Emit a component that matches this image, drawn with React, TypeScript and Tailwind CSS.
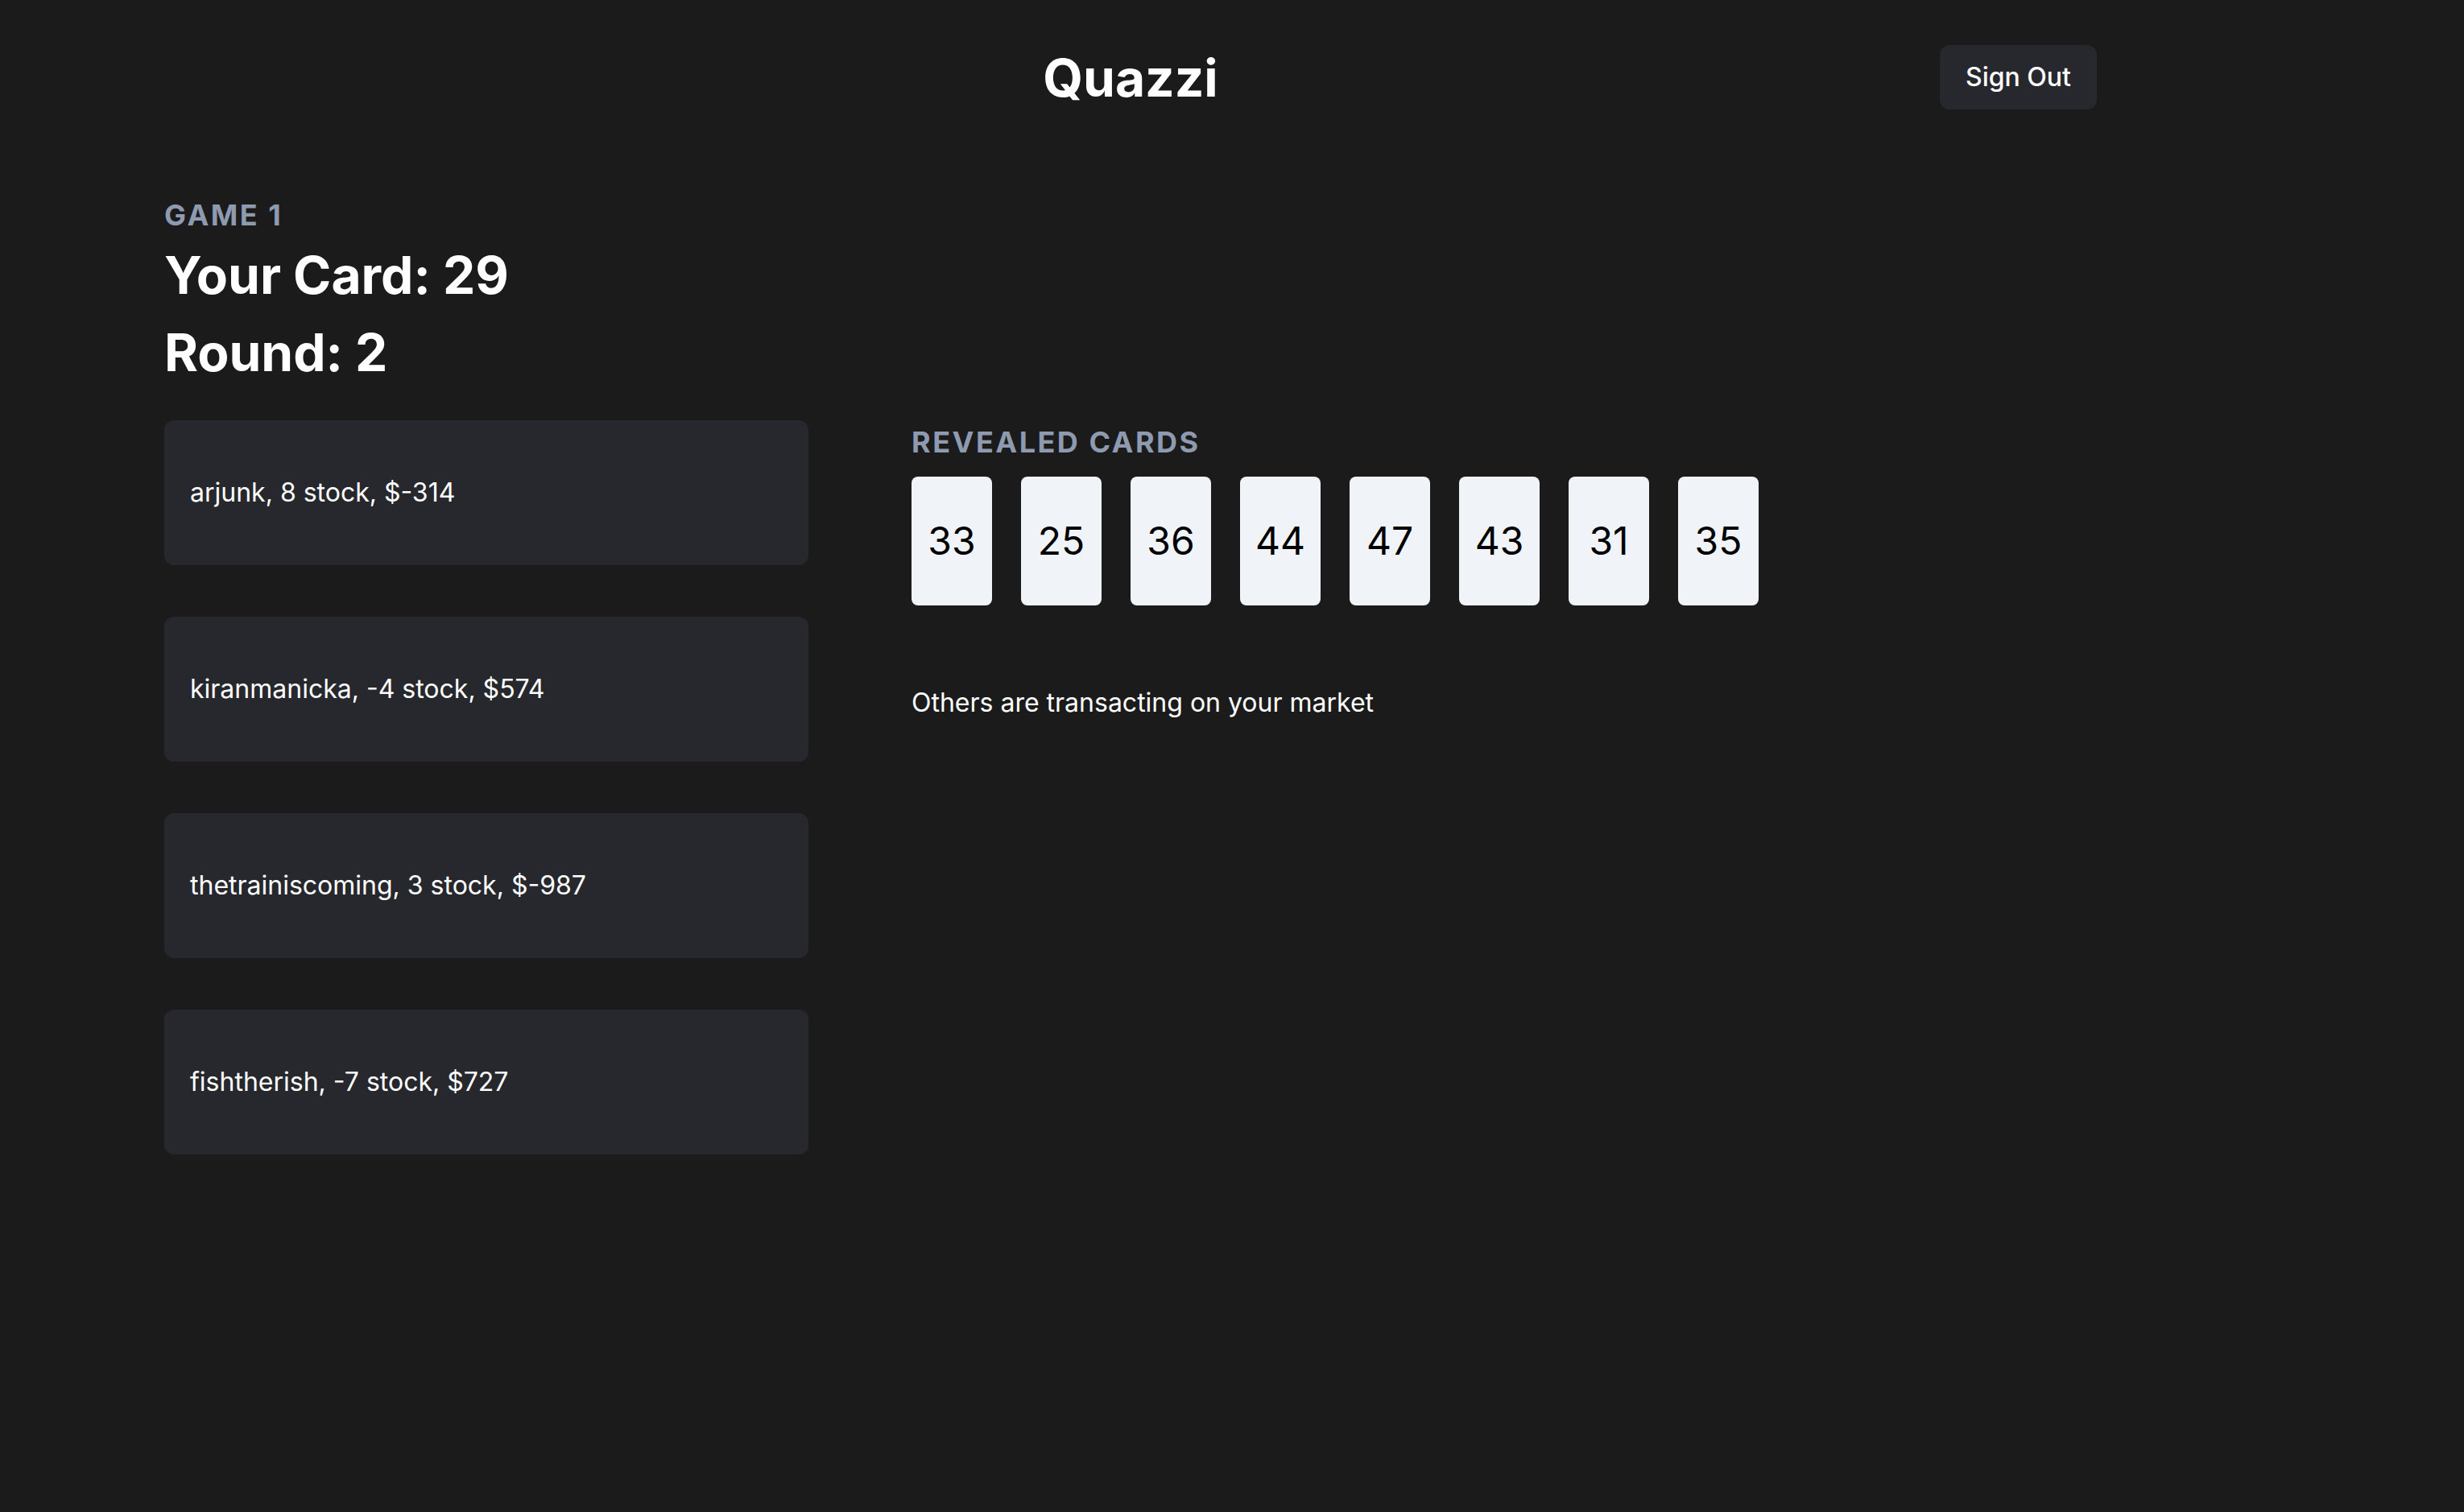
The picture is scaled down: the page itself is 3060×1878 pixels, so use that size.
const PLAYERS = [
  { name: "arjunk", stock: 8, cash: -314 },
  { name: "kiranmanicka", stock: -4, cash: 574 },
  { name: "thetrainiscoming", stock: 3, cash: -987 },
  { name: "fishtherish", stock: -7, cash: 727 },
];

const REVEALED = [33, 25, 36, 44, 47, 43, 31, 35];

export default function App() {
  return (
    <main className="min-h-screen bg-[#1b1b1b] font-['Inter','Liberation_Sans',sans-serif] text-white">
      <div className="ml-[204px] w-[2400px] pt-[56px]">

        {/* Header */}
        <header className="grid h-[80px] grid-cols-3 items-center">
          <div />
          <h1 className="text-center text-[64px] font-bold leading-[77px]">Quazzi</h1>
          <button className="h-[80px] justify-self-end rounded-[12px] bg-[#27282d] px-[32px] text-[32px] font-medium leading-[48px] text-white">
            Sign Out
          </button>
        </header>

        {/* Game info */}
        <div className="mt-[104px]">
          <p className="text-[36px] font-bold uppercase leading-[54px] tracking-[2.5px] text-[#8e9ab0]">
            Game 1
          </p>
          <h2 className="text-[64px] font-bold leading-[96px]">Your Card: 29</h2>
          <h2 className="text-[64px] font-bold leading-[96px]">Round: 2</h2>
        </div>

        <div className="mt-[36px] flex gap-[128px]">
          {/* Players */}
          <div className="flex w-[800px] flex-col gap-[64px]">
            {PLAYERS.map((p) => (
              <div
                key={p.name}
                className="flex h-[180px] items-center rounded-[12px] bg-[#27282d] px-[32px] text-[32px] leading-[48px]"
              >
                {p.name}, {p.stock} stock, ${p.cash}
              </div>
            ))}
          </div>

          {/* Revealed cards */}
          <div>
            <p className="text-[36px] font-bold uppercase leading-[54px] tracking-[2.5px] text-[#8e9ab0]">
              Revealed Cards
            </p>
            <div className="mt-[16px] flex gap-[36px]">
              {REVEALED.map((n, i) => (
                <div
                  key={i}
                  className="flex h-[160px] w-[100px] items-center justify-center rounded-[8px] bg-[#f0f4f8] text-[48px] leading-[72px] text-black"
                >
                  {n}
                </div>
              ))}
            </div>
            <p className="mt-[97px] text-[32px] leading-[48px]">
              Others are transacting on your market
            </p>
          </div>
        </div>

      </div>
    </main>
  );
}
